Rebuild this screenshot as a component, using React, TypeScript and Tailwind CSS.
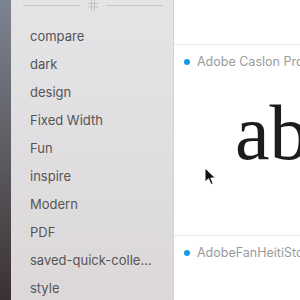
const tags = [
  'compare',
  'dark',
  'design',
  'Fixed Width',
  'Fun',
  'inspire',
  'Modern',
  'PDF',
  'saved-quick-collection',
  'style',
]

function Cursor() {
  return (
    <svg
      className="absolute left-[204px] top-[167px]"
      width="13"
      height="19"
      viewBox="0 0 13 19"
    >
      <path
        d="M1 1 L1 15 L4.5 11.8 L7 17.5 L9.2 16.5 L6.8 11 L11.5 11 Z"
        fill="#111"
        stroke="#fff"
        strokeWidth="1"
        strokeLinejoin="round"
      />
    </svg>
  )
}

function FontRow({ name, showSample }: { name: string; showSample?: boolean }) {
  return (
    <div className="border-t border-[#e6e6e6]">
      <div className="flex items-center gap-[7px] pl-[10px] pt-[9px]">
        <span className="w-[6px] h-[6px] rounded-full bg-[#129ee6] shrink-0" />
        <span className="whitespace-nowrap text-[12.5px] leading-[15px] text-[#9a9a9a]">{name}</span>
      </div>
      {showSample && (
        <div
          className="pl-[61px] pt-[16px] h-[166px] whitespace-nowrap text-[78px] leading-[96px] text-[#1c1c1c]"
          style={{ fontFamily: '"Liberation Serif", "DejaVu Serif", serif' }}
        >
          ab
        </div>
      )}
    </div>
  )
}

export default function App() {
  return (
    <div
      className="relative flex w-[300px] h-[300px] overflow-hidden bg-white"
      style={{ fontFamily: 'Inter, "Liberation Sans", sans-serif' }}
    >
      <div className="w-[11px] shrink-0 bg-gradient-to-b from-[#7d8591] via-[#5e5d63] to-[#3b3133]" />
      <aside className="w-[163px] shrink-0 bg-gradient-to-b from-[#e4e4e7] to-[#dcd8d9] border-r border-[#d4d4d6]">
        <div className="flex items-center gap-[8px] pl-[12px] pr-[10px] h-[11px]">
          <div className="h-px flex-1 bg-[#c6c6c8]" />
          <svg width="10" height="11" viewBox="0 0 10 11" className="shrink-0">
            <path d="M3.5 0 V11 M6.5 0 V11 M0 3.5 H10 M0 7 H10" stroke="#c2c2c4" strokeWidth="1" />
          </svg>
          <div className="h-px flex-1 bg-[#c6c6c8]" />
        </div>
        <ul className="pt-[12px]">
          {tags.map((t) => (
            <li
              key={t}
              className="h-[28px] pl-[19px] pr-[16px] flex items-center text-[13px] text-[#555]"
            >
              <span className="truncate">{t}</span>
            </li>
          ))}
        </ul>
      </aside>
      <main className="flex-1 min-w-0 pt-[44px]">
        <FontRow name="Adobe Caslon Pro" showSample />
        <FontRow name="AdobeFanHeitiStd" />
      </main>
      <Cursor />
    </div>
  )
}
